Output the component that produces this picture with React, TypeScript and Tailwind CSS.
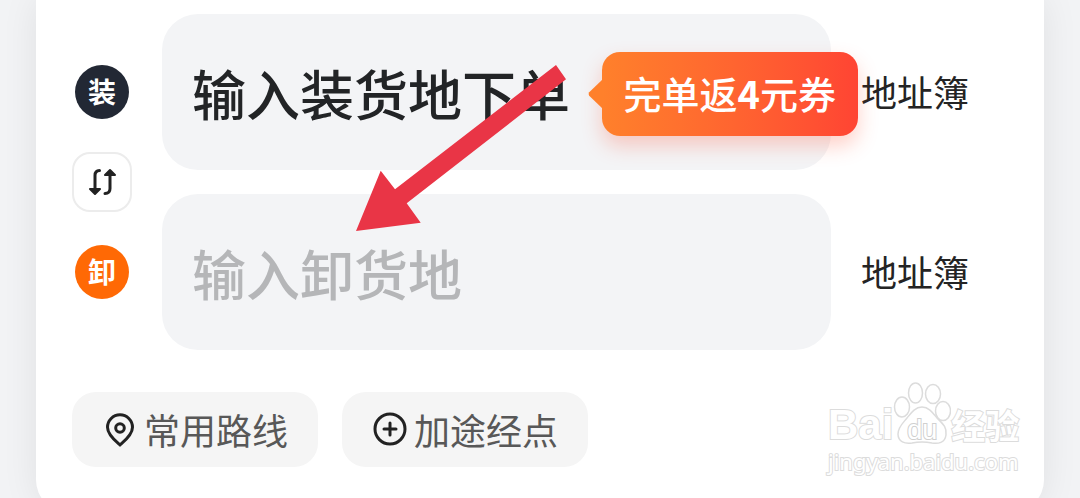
import { useState } from "react"

interface AddressFieldProps {
  label: string
  placeholder: string
  tone: string
  value: string
  onChange: (value: string) => void
  children?: React.ReactNode
}

function AddressField({ label, placeholder, tone, value, onChange, children }: AddressFieldProps) {
  return (
    <div className="flex items-center">
      <div className="relative flex-1 min-w-0">
        <input
          type="text"
          aria-label={label}
          placeholder={placeholder}
          value={value}
          onChange={(e) => onChange(e.target.value)}
          className={`block w-full h-[156px] px-[30px] rounded-[36px] bg-[#f3f4f6] text-[54px] font-medium text-[#222426] outline-none ${tone}`}
        />
        {children}
      </div>
      <a href="#address-book" className="w-[177px] pb-0.5 pl-[30px] text-[36px] leading-[54px] text-[#242424] whitespace-nowrap">
        地址簿
      </a>
    </div>
  )
}

function CouponBubble() {
  return (
    <div className="absolute top-[38px] -right-[27px] h-[84px] px-[22px] flex items-center rounded-[18px] bg-linear-to-r from-[#ff802b] to-[#ff4433] text-white text-[38px] font-medium whitespace-nowrap shadow-[0_10px_20px_rgba(255,70,40,0.25)]">
      <svg viewBox="0 0 15 30" className="absolute -left-[14px] top-[27px] w-[15px] h-[30px]">
        <path d="M15 0 L1.2 13.2 Q0 15 1.2 16.8 L15 30 Z" fill="#ff802b" />
      </svg>
      <span className="pb-1">
        完单返<b className="font-bold">4</b>元券
      </span>
    </div>
  )
}

function SwapIcon() {
  return (
    <svg viewBox="0 0 28 28" className="w-7 h-7" fill="none" stroke="#222" strokeWidth="3" strokeLinecap="round">
      <path d="M11.500 2.500 Q7 2.500 7 7.500 V21" />
      <path d="M2 21 H12 L7 26 Z" fill="#222" strokeWidth="2" strokeLinejoin="round" />
      <path d="M17 25.500 Q22 25.500 22 20.500 V7" />
      <path d="M17 7 H27 L22 2 Z" fill="#222" strokeWidth="2" strokeLinejoin="round" />
    </svg>
  )
}

function PinIcon() {
  return (
    <svg viewBox="0 0 36 36" className="w-9 h-9" fill="none" stroke="#222" strokeWidth="3">
      <path d="M18 33 C14 29.500 5.500 23 5.500 15.300 A12.500 12.500 0 0 1 30.500 15.300 C30.500 23 22 29.500 18 33 Z" strokeLinejoin="round" />
      <circle cx="18" cy="16" r="4.300" />
    </svg>
  )
}

function PlusIcon() {
  return (
    <svg viewBox="0 0 36 36" className="w-9 h-9" fill="none" stroke="#222" strokeWidth="3" strokeLinecap="round">
      <circle cx="18" cy="17" r="15" />
      <path d="M18 11 V23 M12 17 H24" />
    </svg>
  )
}

function PointerArrow() {
  return (
    <svg viewBox="0 0 212 168" className="absolute left-[319px] top-[64px] w-[212px] h-[168px] pointer-events-none">
      <path d="M201 1 L211 15.300 L51.700 139.300 L65.700 158.700 L1 167 L25.700 106.700 L40 125.300 Z" fill="#e93546" />
    </svg>
  )
}

function Watermark() {
  const outline = "text-white [paint-order:stroke_fill] [-webkit-text-stroke:2px_#dcdcdc]"
  return (
    <div className="absolute right-[22px] bottom-[36px] w-[194px] whitespace-nowrap pointer-events-none">
      <div className="flex items-end h-[64px]">
        <span className={`text-[42px] leading-[42px] font-bold font-['Liberation_Sans'] ${outline}`}>Bai</span>
        <span className="relative shrink-0 w-[58px] h-[64px]">
          <svg viewBox="-1 0 58 64" className="absolute inset-0 w-full h-full" fill="white" stroke="#dcdcdc" strokeWidth="1.500">
            <ellipse cx="8" cy="25" rx="7.500" ry="10" />
            <ellipse cx="21.500" cy="11" rx="7" ry="10" />
            <ellipse cx="39" cy="12" rx="7.500" ry="9.500" />
            <ellipse cx="49" cy="29" rx="7.500" ry="9.500" />
            <path d="M28 25 C35 25 39 31 43 36 C49 42 53 45 52 53 C51 61 44 62 38 61 C31 59.500 25 59.500 18 61 C11 62 4 60 4 52 C4 45 9 41 13 36 C17 31 21 25 28 25 Z" />
          </svg>
          <span className="absolute inset-x-0 bottom-0 text-center text-[27px] leading-[32px] font-['Liberation_Sans'] text-white [paint-order:stroke_fill] [-webkit-text-stroke:2px_#d0d0d0]">
            du
          </span>
        </span>
        <span className={`text-[34px] leading-[42px] font-bold ${outline}`}>经验</span>
      </div>
      <div className={`text-[22px] leading-[30px] font-['Noto_Sans'] ${outline}`}>jingyan.baidu.com</div>
    </div>
  )
}

const chipClass =
  "flex items-center gap-1.5 h-[75px] px-[30px] rounded-[24px] bg-[#f5f5f5] text-[36px] text-[#585858] whitespace-nowrap"

export default function App() {
  const [from, setFrom] = useState("")
  const [to, setTo] = useState("")

  const handleSwap = () => {
    setFrom(to)
    setTo(from)
  }

  return (
    <div className="h-screen overflow-hidden bg-[#f2f3f5] px-9 font-['Noto_Sans_CJK_SC',sans-serif]">
      <main className="relative px-9 pt-[14px] pb-[45px] bg-white rounded-b-[32px] shadow-[0_0_36px_rgba(0,0,0,0.08)]">
        <div className="flex gap-[30px]">
          {/* Load / unload markers */}
          <div className="w-[60px] flex flex-col items-center justify-center gap-[33px]">
            <span className="w-[54px] h-[54px] rounded-full bg-[#222834] text-white text-[28px] leading-[52px] font-bold text-center">装</span>
            <button
              onClick={handleSwap}
              aria-label="交换"
              className="w-[60px] h-[60px] flex items-center justify-center rounded-[18px] border-2 border-[#ececec] bg-white"
            >
              <SwapIcon />
            </button>
            <span className="w-[54px] h-[54px] rounded-full bg-[#ff6905] text-white text-[28px] leading-[52px] font-bold text-center">卸</span>
          </div>

          {/* Addresses */}
          <div className="flex-1 min-w-0 flex flex-col gap-6">
            <AddressField
              label="装货地"
              placeholder="输入装货地下单"
              tone="placeholder:text-[#222426]"
              value={from}
              onChange={setFrom}
            >
              <CouponBubble />
            </AddressField>
            <AddressField
              label="卸货地"
              placeholder="输入卸货地"
              tone="placeholder:text-[#b5b6b8]"
              value={to}
              onChange={setTo}
            />
          </div>
        </div>

        <div className="flex gap-6 mt-[42px]">
          <button className={chipClass}>
            <PinIcon />
            <span className="pb-0.5">常用路线</span>
          </button>
          <button className={chipClass}>
            <PlusIcon />
            <span className="pb-0.5">加途经点</span>
          </button>
        </div>

        <PointerArrow />
        <Watermark />
      </main>
    </div>
  )
}
